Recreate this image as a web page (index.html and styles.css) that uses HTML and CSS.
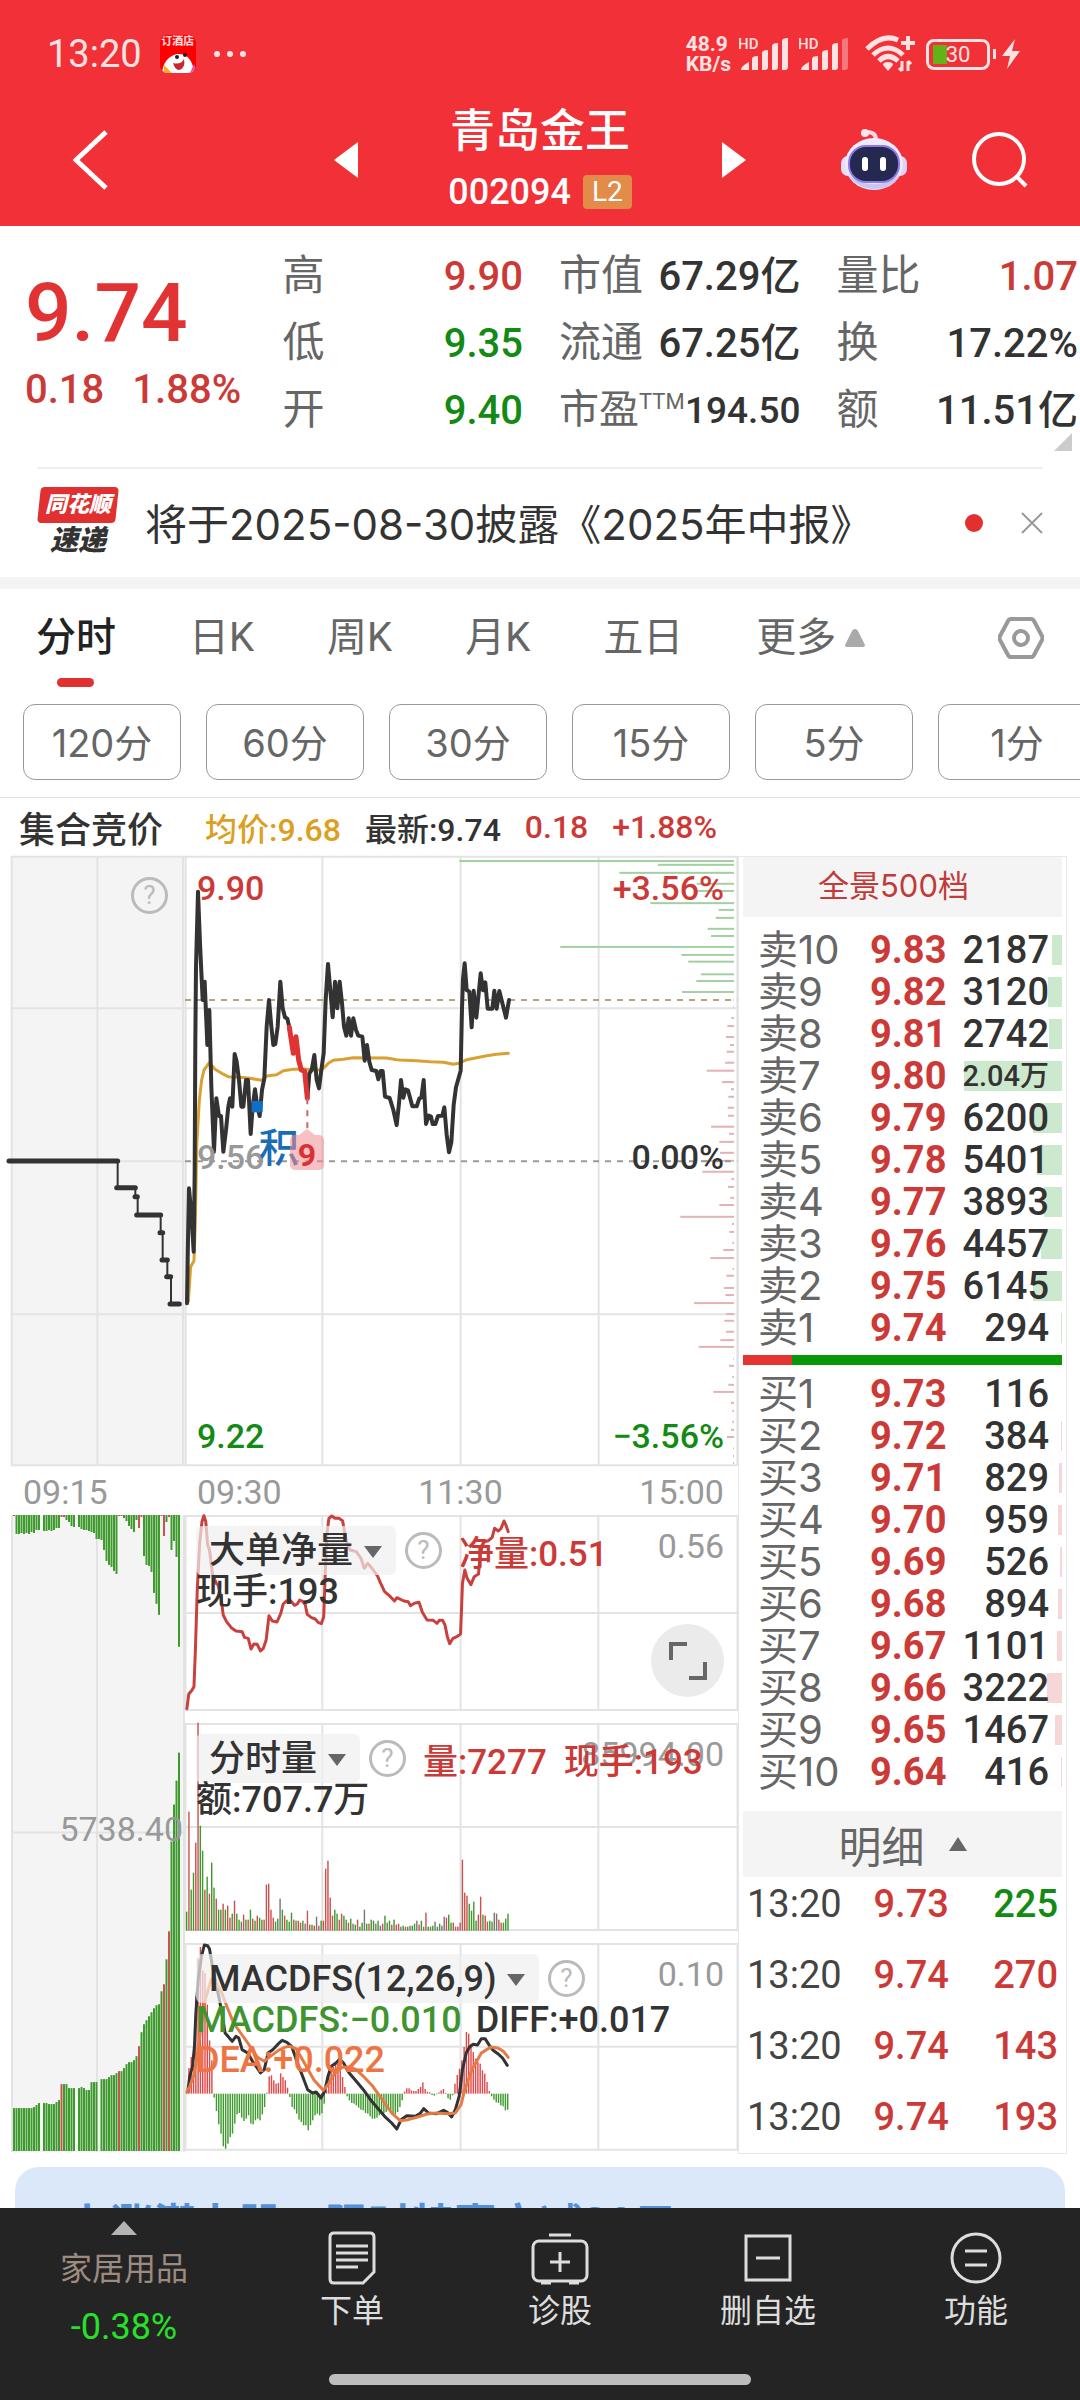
FILE: index.html
```html
<!DOCTYPE html>
<html lang="zh-CN">
<head>
    <meta charset="UTF-8">
    <meta name="viewport" content="width=device-width, initial-scale=1.0">
    <title>青岛金王 002094</title>
    <link rel="stylesheet" href="styles.css">
</head>
<body>
    <header class="top">
        <!-- 状态栏 -->
        <div class="status">
            <span class="clock">13:20</span>
            <span class="app-icon"><b>订酒店</b>
                <svg width="38" height="24" viewBox="0 0 38 24"><path d="M2 24c1-10 6-17 15-19 9-1 16 5 17 19z" fill="#fff"/><path d="M4 24v-8l8 8z" fill="#f6b21d"/><path d="M13 14q8 2 11-4 2 9-5 11-4 0-6-7z" fill="#c9272d"/><circle cx="17" cy="8" r="2" fill="#222"/><circle cx="25" cy="6" r="2" fill="#222"/><path d="M30 24l4-9 3 9z" fill="#e354a4"/></svg>
            </span>
            <span class="dots"><i></i><i></i><i></i></span>
            <span class="speed">48.9<br>KB/s</span>
            <svg class="signal" width="50" height="36" viewBox="0 0 50 36" fill="#ffe3e3"><text x="-1" y="13" font-size="15">HD</text><path d="M2 34q0-4 8-8v8zM13 34V23q0-3 6-3v14zM23 34V17q0-3 6-3v17q0 3-3 3zM33 34V10q0-3 6-3v24q0 3-3 3zM43 34V5q0-3 6-3v29q0 3-3 3z"/></svg>
            <svg class="signal" width="50" height="36" viewBox="0 0 50 36" fill="#ffe3e3"><text x="-1" y="13" font-size="15">HD</text><path d="M2 34q0-4 8-8v8zM13 34V23q0-3 6-3v14zM23 34V17q0-3 6-3v17q0 3-3 3zM33 34V10q0-3 6-3v24q0 3-3 3z"/><path d="M43 34V5q0-3 6-3v29q0 3-3 3z" opacity=".4"/></svg>
            <svg class="wifi" width="50" height="38" viewBox="0 0 50 38" fill="none" stroke="#ffe3e3" stroke-width="5"><path d="M2 14Q18-2 33 5M8 20Q23 6 38 20M14 26Q23 17 33 26"/><path d="M23 27q-5 0-5 3l5 6 5-6q0-3-5-3z" fill="#ffe3e3" stroke="none"/><path d="M43 1v14M36 8h14" stroke-width="4"/><path d="M37 26v10M43 26v10M34 33l3 3M46 29l-3-3" stroke-width="3"/></svg>
            <span class="battery"><b>30</b></span>
            <svg class="bolt" width="18" height="30" viewBox="0 0 18 30" fill="#ffe3e3"><path d="M13 0L0 17h8L5 30 18 12h-8z"/></svg>
        </div>
        <!-- 标题栏 -->
        <div class="title-bar">
            <div class="title-side">
                <button class="icon-btn" aria-label="返回"><svg width="36" height="60" viewBox="0 0 36 60" fill="none" stroke="#fff" stroke-width="5"><path d="M33 2L3 30l30 28"/></svg></button>
                <button class="icon-btn" aria-label="上一只"><svg width="24" height="36" viewBox="0 0 24 36" fill="#fff"><path d="M24 0v36L0 18z"/></svg></button>
            </div>
            <div class="stock-name">
                <h1>青岛金王</h1>
                <p>002094 <span class="l2">L2</span></p>
            </div>
            <div class="title-side">
                <button class="icon-btn next" aria-label="下一只"><svg width="24" height="36" viewBox="0 0 24 36" fill="#fff"><path d="M0 0l24 18L0 36z"/></svg></button>
                <button class="icon-btn" aria-label="智能助手">
                    <svg width="68" height="64" viewBox="0 0 68 64">
                        <path d="M36 12q0-8-9-8" fill="none" stroke="#f6d9e6" stroke-width="4"/><circle cx="25" cy="5" r="4" fill="#fbe6ee"/>
                        <rect x="1" y="28" width="14" height="20" rx="7" fill="#e6defc"/><rect x="53" y="28" width="14" height="20" rx="7" fill="#dcd3fa"/>
                        <ellipse cx="34" cy="36" rx="29" ry="26" fill="#eceafc"/><path d="M8 46q8 14 26 15 19 0 26-15-10 10-26 10T8 46z" fill="#c9c6f4"/>
                        <rect x="9" y="18" width="50" height="36" rx="17" fill="#26294f" stroke="#8d79e8" stroke-width="2"/>
                        <rect x="22" y="29" width="6" height="14" rx="3" fill="#fff"/><rect x="40" y="29" width="6" height="14" rx="3" fill="#fff"/>
                    </svg>
                </button>
                <button class="icon-btn search" aria-label="搜索"><svg width="56" height="56" viewBox="0 0 56 56" fill="none" stroke="#fff" stroke-width="4"><circle cx="27" cy="27" r="25"/><path d="M44 44l10 10"/></svg></button>
            </div>
        </div>
    </header>

    <!-- 报价 -->
    <section class="quote">
        <div class="price">
            <strong>9.74</strong>
            <p><span>0.18</span><span>1.88%</span></p>
        </div>
        <dl>
            <div><dt>高</dt><dd class="red">9.90</dd></div>
            <div><dt>低</dt><dd class="green">9.35</dd></div>
            <div><dt>开</dt><dd class="green">9.40</dd></div>
        </dl>
        <dl>
            <div><dt>市值</dt><dd>67.29亿</dd></div>
            <div><dt>流通</dt><dd>67.25亿</dd></div>
            <div class="small"><dt>市盈<sup>TTM</sup></dt><dd>194.50</dd></div>
        </dl>
        <dl>
            <div><dt>量比</dt><dd class="red">1.07</dd></div>
            <div><dt>换</dt><dd>17.22%</dd></div>
            <div><dt>额</dt><dd>11.51亿</dd></div>
        </dl>
        <svg class="corner" width="18" height="18" viewBox="0 0 18 18" fill="#ccc"><path d="M18 0v18H0z"/></svg>
    </section>

    <!-- 快讯 -->
    <section class="news">
        <span class="news-logo"><b>同花顺</b><i>速递</i></span>
        <a href="#">将于2025-08-30披露《2025年中报》</a>
        <span class="dot"></span>
        <button class="icon-btn" aria-label="关闭"><svg width="22" height="22" viewBox="0 0 22 22" stroke="#999" stroke-width="2"><path d="M1 1l20 20M21 1L1 21"/></svg></button>
    </section>

    <nav class="tabs">
        <a href="#" class="active">分时</a>
        <a href="#">日K</a>
        <a href="#">周K</a>
        <a href="#">月K</a>
        <a href="#">五日</a>
        <a href="#">更多<svg width="20" height="18" viewBox="0 0 20 18" fill="#aaa"><path d="M10 0q2 0 3 2l7 14q0 2-2 2H2q-2 0-2-2L7 2q1-2 3-2z"/></svg></a>
        <button class="icon-btn setting" aria-label="设置"><svg width="46" height="44" viewBox="0 0 46 44" fill="none" stroke="#999" stroke-width="4"><path d="M13 3h20q2 0 3 2l8 15q1 2 0 4l-8 15q-1 2-3 2H13q-2 0-3-2L2 24q-1-2 0-4L10 5q1-2 3-2z"/><circle cx="23" cy="22" r="7"/></svg></button>
    </nav>
    <div class="periods">
        <button>120分</button>
        <button>60分</button>
        <button>30分</button>
        <button>15分</button>
        <button>5分</button>
        <button>1分</button>
    </div>

    <div class="summary">
        <span>集合竞价</span>
        <span class="avg">均价:9.68</span>
        <span>最新:9.74</span>
        <span class="red">0.18</span>
        <span class="red">+1.88%</span>
    </div>

    <main class="market">
        <div class="charts">
            <!-- 集合竞价 -->
            <div class="auction">
                <div class="auction-price">
                    <svg viewBox="33 48 522 1830" preserveAspectRatio="none">
                        <path class="grid" d="M33 50H555M33 505H555M33 964H555M33 1423H555M33 1876H555M35 48V1878M292 48V1878M549 48V1878"/>
                        <path class="line" d="M353 963V1043M406 1043V1070M413 1070V1125M482 1125V1178M488 1178V1260M502 1260V1310M513 1310V1392" stroke-width="2"/>
                        <path class="line" d="M27 963H353M350 1043H406M405 1070H412M410 1125H482M480 1178H488M486 1260H502M500 1310H512M510 1392H538" stroke-width="5"/>
                    </svg>
                    <button class="help" aria-label="集合竞价说明">?</button>
                </div>
                <div class="times"><span>09:15</span></div>
                <div class="auction-volume">
                    <svg viewBox="11 1515 174 638" preserveAspectRatio="none">
                        <path class="grid" d="M12 1515V2153M97 1515V2153M184 1515V2153M11 1833H185"/>
                        <g id="auctionBars"></g>
                    </svg>
                    <span class="scale">5738.40</span>
                </div>
            </div>

            <!-- 分时走势 -->
            <div class="session">
                <div class="price-chart">
                    <svg viewBox="555 48 1659 1830" preserveAspectRatio="none">
                        <path class="grid" d="M555 50H2214M555 505H2214M555 1423H2214M555 1876H2214M557 48V1878M967 48V1878M1382 48V1878M1796 48V1878M2212 48V1878"/>
                        <g id="depthBars"></g>
                        <path class="dash" d="M555 480H2212" stroke="#b5a47c"/>
                        <path class="dash" d="M555 964H2212" stroke="#999"/>
                        <polyline class="line avg-line" points="565,1385 572,1280 582,1262 586,1150 590,920 598,780 605,720 612,690 628,668 645,688 665,700 685,710 720,712 750,715 785,721 800,708 830,704 850,692 880,688 910,687 940,689 965,690 985,670 1000,661 1030,658 1060,653 1160,654 1190,659 1200,660 1250,662 1290,665 1330,667 1360,673 1380,669 1400,659 1430,653 1460,647 1490,643 1525,640"/>
                        <polyline class="line" stroke-width="4" points="561,1390 564,1200 567,1045 574,1120 581,1235 584,1000 586,600 588,380 594,155 600,310 608,480 614,425 622,615 628,510 634,740 642,935 649,775 657,828 663,828 670,935 678,870 685,800 690,775 697,800 704,642 710,665 717,720 724,800 730,800 738,720 744,720 752,882 758,800 765,748 772,800 779,828 786,750 793,715 800,560 807,480 814,560 820,615 826,612 833,560 841,425 848,505 855,532 862,536 868,562"/>
                        <polyline class="line" stroke-width="4" points="922,775 928,700 935,690 943,645 950,720 957,745 964,690 971,640 977,480 984,372 990,440 998,532 1005,425 1012,505 1019,425 1026,490 1032,560 1039,587 1046,535 1053,587 1060,535 1068,570 1075,587 1087,590 1094,662 1101,615 1108,665 1115,690 1129,693 1135,718 1142,693 1148,693 1155,770 1169,774 1180,810 1190,855 1197,790 1203,720 1210,773 1216,748 1224,751 1237,799 1250,799 1258,775 1264,773 1271,720 1278,852 1286,827 1293,830 1298,852 1306,852 1314,828 1327,827 1333,802 1340,884 1347,937 1354,907 1361,795 1368,742 1382,692 1386,505 1389,417 1394,370 1400,450 1408,455 1415,562 1421,452 1429,533 1442,400 1449,451 1456,427 1463,506 1477,506 1483,452 1490,506 1498,453 1518,533 1527,480"/>
                        <polyline class="line nine-line" points="868,562 880,640 888,590 896,660 904,690 914,694 922,775"/>
                        <path d="M922 775V870" class="dash" stroke="#c66"/>
                        <rect x="755" y="783" width="33" height="34" fill="#0f6fc6"/>
                    </svg>
                    <span class="mark left high red">9.90</span>
                    <span class="mark right high red">+3.56%</span>
                    <span class="mark left mid gray">9.56</span>
                    <span class="mark right mid">0.00%</span>
                    <span class="mark left low green">9.22</span>
                    <span class="mark right low green">−3.56%</span>
                    <span class="tag-ji">积</span>
                    <span class="tag-nine">9</span>
                </div>
                <div class="times"><span>09:30</span><span>11:30</span><span>15:00</span></div>

                <div class="indicator net">
                    <svg viewBox="392 195 1172 588" preserveAspectRatio="none">
                        <path class="grid" d="M392 198H1564M392 489H1564M392 780H1564M393 195V783M683 195V783M976 195V783M1268 195V783M1563 195V783"/>
                        <polyline class="line net-line" points="396,776 400,732 406,722 411,710 414,600 418,420 423,280 428,215 432,197 436,215 440,285 444,300 450,370 458,400 462,405 468,440 473,495 480,515 490,533 500,543 513,545 518,562 526,565 532,597 538,582 545,583 552,603 558,595 564,570 570,497 577,513 587,516 595,490 600,462 608,452 616,452 624,466 630,462 635,450 642,455 647,465 651,493 660,503 668,507 675,518 681,521 686,500 688,420 690,340 693,250 697,205 703,198 710,205 718,205 726,212 730,245 736,285 742,300 755,305 765,325 772,355 779,340 790,358 800,378 806,398 815,425 825,437 836,453 841,443 856,453 865,455 870,467 878,460 888,457 895,487 905,510 918,511 926,520 931,511 938,511 943,525 948,560 953,581 960,565 968,560 976,552 978,480 980,400 985,360 990,385 998,404 1005,380 1014,372 1018,310 1025,275 1035,272 1043,262 1048,235 1056,243 1062,235 1068,213 1072,225 1077,245"/>
                    </svg>
                    <span class="scale">0.56</span>
                    <div class="legend">
                        <span class="picker"><select aria-label="指标一"><option>大单净量</option></select></span>
                        <button class="help" aria-label="大单净量说明">?</button>
                        <span class="red">净量:0.51</span>
                    </div>
                    <div class="legend-row"><span>现手:193</span></div>
                    <button class="expand" aria-label="全屏"><svg width="38" height="38" viewBox="0 0 38 38" fill="none" stroke="#666" stroke-width="4"><path d="M2 18V2h16M36 20v16H20"/></svg></button>
                </div>
                <div class="indicator">
                    <svg viewBox="392 39 1172 624" preserveAspectRatio="none">
                        <path class="grid" d="M392 42H1564M392 351H1564M392 660H1564M393 39V663M683 39V663M976 39V663M1268 39V663M1563 39V663"/>
                        <g id="volumeBars"></g>
                    </svg>
                    <span class="scale">85994.00</span>
                    <div class="legend">
                        <span class="picker"><select aria-label="指标二"><option>分时量</option></select></span>
                        <button class="help" aria-label="分时量说明">?</button>
                        <span class="red">量:7277</span>
                        <span class="red">现手:193</span>
                    </div>
                    <div class="legend-row"><span>额:707.7万</span></div>
                </div>
                <div class="indicator">
                    <svg viewBox="392 70 1172 624" preserveAspectRatio="none">
                        <path class="grid" d="M392 73H1564M392 381H1564M392 690H1564M393 70V694M683 70V694M976 70V694M1268 70V694M1563 70V694"/>
                        <g id="macdBars"></g>
                        <polyline class="line" stroke-width="3" points="398,515 402,470 408,440 412,380 415,280 420,180 427,110 433,76 440,78 444,88 450,140 458,195 465,240 470,280 477,340 492,365 500,350 506,355 513,390 525,400 535,425 545,445 552,460 560,450 568,400 578,390 590,372 598,362 608,368 618,380 628,420 640,465 652,510 662,520 670,517 680,535 688,515 695,470 702,440 712,430 720,418 728,430 740,460 755,485 770,510 785,540 800,565 815,590 830,610 841,628 850,600 862,588 880,590 890,582 898,567 908,580 925,582 940,572 948,578 957,592 965,570 973,530 980,450 988,400 995,382 1003,374 1012,376 1020,357 1028,357 1036,375 1045,392 1055,402 1065,415 1075,437"/>
                        <polyline class="line dea-line" points="396,517 402,500 410,470 418,410 425,330 435,240 448,178 458,190 470,220 482,265 495,310 510,340 525,370 545,412 560,425 575,408 590,392 605,382 615,380 628,388 645,430 665,480 685,512 695,495 710,460 725,443 740,442 755,450 770,470 790,500 810,540 830,580 848,603 865,600 885,592 905,583 925,580 950,582 965,580 977,555 985,510 1000,450 1020,400 1040,382 1055,385 1067,395 1077,413"/>
                    </svg>
                    <span class="scale">0.10</span>
                    <div class="legend">
                        <span class="picker"><select aria-label="指标三"><option>MACDFS(12,26,9)</option></select></span>
                        <button class="help" aria-label="MACD说明">?</button>
                    </div>
                    <div class="legend-row"><span class="macd">MACDFS:−0.010</span><span>DIFF:+0.017</span></div>
                    <div class="legend-row"><span class="dea">DEA:+0.022</span></div>
                </div>
            </div>
        </div>

        <!-- 盘口 -->
        <aside class="book">
            <a href="#" class="book-head">全景500档</a>
            <table class="orders sell"><tbody id="sellRows"></tbody></table>
            <div class="ratio"><i style="width: 15.5%"></i></div>
            <table class="orders buy"><tbody id="buyRows"></tbody></table>
            <button class="detail-head">明细<svg width="18" height="14" viewBox="0 0 18 14" fill="#666"><path d="M9 0l9 14H0z"/></svg></button>
            <table class="detail">
                <tbody>
                    <tr><td>13:20</td><td class="red">9.73</td><td class="green">225</td></tr>
                    <tr><td>13:20</td><td class="red">9.74</td><td class="red">270</td></tr>
                    <tr><td>13:20</td><td class="red">9.74</td><td class="red">143</td></tr>
                    <tr><td>13:20</td><td class="red">9.74</td><td class="red">193</td></tr>
                </tbody>
            </table>
        </aside>
    </main>

    <div class="promo-wrap"><a href="#" class="promo">上涨潜力股，限时特惠立减30元</a></div>

    <!-- 底部导航 -->
    <footer class="bottom">
        <nav class="actions">
            <a href="#" class="sector">
                <svg width="26" height="14" viewBox="0 0 26 14" fill="#b4b4b4"><path d="M13 0l13 14H0z"/></svg>
                <span>家居用品</span>
                <b>-0.38%</b>
            </a>
            <a href="#"><svg width="50" height="54" viewBox="0 0 50 54" fill="none" stroke="#ddd" stroke-width="3"><path d="M7 2h36q4 0 4 4v35L36 52H7q-4 0-4-4V6q0-4 4-4z"/><path d="M9 15h32M9 22h32M9 29h32M9 36h22"/></svg>下单</a>
            <a href="#"><svg width="58" height="54" viewBox="0 0 58 54" fill="none" stroke="#ddd" stroke-width="3"><rect x="2" y="10" width="54" height="40" rx="6"/><path d="M18 4h22M10 52h10M38 52h10M29 21v20M19 31h20"/></svg>诊股</a>
            <a href="#"><svg width="50" height="54" viewBox="0 0 50 54" fill="none" stroke="#ddd" stroke-width="3"><path d="M3 5h44v44H3zM13 27h24"/></svg>删自选</a>
            <a href="#"><svg width="52" height="54" viewBox="0 0 52 54" fill="none" stroke="#ddd" stroke-width="3"><circle cx="26" cy="27" r="24"/><path d="M15 20h22M15 34h22"/></svg>功能</a>
        </nav>
        <div class="home-bar"></div>
    </footer>

    <script src="script.js"></script>
</body>
</html>
```
FILE: styles.css
```css
* {
    box-sizing: border-box;
}
body {
    margin: 0;
    background: #fff;
    color: #333;
    font-family: Roboto, "Noto Sans CJK SC", sans-serif;
    font-size: 36px;
}
h1, p, dl, dd {
    margin: 0;
}
a {
    color: inherit;
    text-decoration: none;
}
button, select {
    font: inherit;
    color: inherit;
    background: none;
    border: none;
    padding: 0;
    margin: 0;
}
svg {
    display: block;
    flex: none;
}
table {
    width: 100%;
    border-collapse: collapse;
}
.icon-btn {
    display: flex;
    align-items: center;
}
.red {
    color: #cc3a38;
}
.green {
    color: #138a13;
}
.gray {
    color: #999;
}

/* 顶部 */
.top {
    background: #f13037;
    color: #fff;
    height: 226px;
}
.status {
    display: flex;
    align-items: center;
    height: 108px;
    padding: 0 60px 0 47px;
    color: #ffe3e3;
}
.clock {
    font-size: 38px;
}
.app-icon {
    width: 36px;
    height: 38px;
    margin: 0 18px;
    background: #f00;
    border-radius: 8px;
    overflow: hidden;
    text-align: center;
}
.app-icon b {
    display: block;
    font-size: 11px;
    line-height: 14px;
    white-space: nowrap;
}
.dots {
    display: flex;
    gap: 7px;
}
.dots i {
    width: 6px;
    height: 6px;
    border-radius: 50%;
    background: #ffe3e3;
}
.speed {
    margin-left: auto;
    margin-right: 8px;
    font-size: 21px;
    font-weight: 700;
    line-height: 20px;
}
.signal {
    margin-right: 10px;
    font-weight: 500;
}
.wifi {
    margin: 0 11px 0 6px;
}
.battery {
    position: relative;
    width: 64px;
    height: 31px;
    border: 3px solid #ffe3e3;
    border-radius: 8px;
    text-align: center;
    background: linear-gradient(#62b318, #62b318) 4px center / 14px 19px no-repeat;
}
.battery::after {
    content: "";
    position: absolute;
    right: -9px;
    top: 7px;
    width: 3px;
    height: 10px;
    background: #ffe3e3;
}
.battery b {
    display: block;
    font-size: 22px;
    font-weight: 400;
    line-height: 25px;
}
.bolt {
    margin-left: 12px;
}
.title-bar {
    display: grid;
    grid-template-columns: 1fr auto 1fr;
    align-items: start;
    column-gap: 90px;
    padding: 0 52px;
}
.title-side {
    display: flex;
    align-items: center;
    justify-content: space-between;
    height: 104px;
}
.title-side:first-child {
    padding-left: 21px;
}
.next {
    margin-right: auto;
}
.search {
    margin-left: 64px;
}
.stock-name {
    text-align: center;
}
.stock-name h1 {
    font-size: 45px;
    font-weight: 500;
    line-height: 48px;
}
.stock-name p {
    display: flex;
    align-items: center;
    gap: 12px;
    margin-top: 6px;
    font-size: 36px;
    font-weight: 500;
    line-height: 60px;
}
.l2 {
    padding: 0 9px;
    font-size: 28px;
    font-weight: 400;
    line-height: 34px;
    background: #e38b48;
    border-radius: 4px;
}

/* 报价 */
.quote {
    position: relative;
    display: grid;
    grid-template-columns: 258fr 277fr 278fr 242fr;
    padding: 17px 2px 23px 25px;
}
.price {
    color: #e23334;
    padding-top: 17px;
}
.price strong {
    display: block;
    font-size: 82px;
    font-weight: 500;
    line-height: 106px;
}
.price p {
    display: flex;
    gap: 28px;
    font-size: 40px;
    font-weight: 500;
    line-height: 48px;
    color: #cc3a38;
}
.quote dl {
    padding-right: 36px;
}
.quote dl:last-of-type {
    padding-right: 0;
}
.quote dl div {
    display: flex;
    justify-content: space-between;
    align-items: center;
    height: 67px;
    white-space: nowrap;
    font-size: 40px;
}
.quote dl .small {
    font-size: 37px;
}
.quote dt {
    color: #666;
    font-size: 42px;
    line-height: 54px;
    padding-bottom: 2px;
}
.quote .small dt {
    font-size: 40px;
}
.quote sup {
    font-size: 22px;
    line-height: 22px;
}
.quote dd {
    font-weight: 500;
    line-height: 48px;
}
.corner {
    position: absolute;
    right: 8px;
    bottom: 16px;
}

/* 快讯 */
.news {
    display: flex;
    align-items: center;
    height: 110px;
    margin: 0 37px;
    border-top: 2px solid #eee;
}
.news-logo {
    position: relative;
    width: 82px;
    text-align: center;
    font-style: italic;
    font-weight: 900;
}
.news-logo::before {
    content: "";
    position: absolute;
    inset: 0 2px auto;
    height: 36px;
    background: #e0302f;
    border-radius: 4px;
    transform: skewX(-6deg);
}
.news-logo b, .news-logo i {
    display: block;
    position: relative;
    line-height: 36px;
}
.news-logo b {
    font-size: 22px;
    color: #fff;
}
.news-logo i {
    font-size: 28px;
}
.news a {
    flex: 1;
    margin-left: 26px;
    padding-bottom: 4px;
    font-family: Inter, "Noto Sans CJK SC", sans-serif;
    font-size: 42px;
    white-space: nowrap;
}
.dot {
    width: 18px;
    height: 18px;
    margin-right: 38px;
    border-radius: 50%;
    background: #e23030;
}

/* 周期切换 */
.tabs {
    display: flex;
    align-items: flex-start;
    gap: 73px;
    height: 127px;
    padding: 18px 36px 0;
    border-top: 12px solid #f4f4f4;
    font-size: 40px;
    color: #666;
}
.tabs a {
    display: flex;
    align-items: center;
    gap: 9px;
    line-height: 62px;
    white-space: nowrap;
}
.tabs .active {
    position: relative;
    color: #222;
    font-weight: 500;
}
.active::after {
    content: "";
    position: absolute;
    left: 21px;
    bottom: -18px;
    width: 37px;
    height: 9px;
    border-radius: 5px;
    background: #e03030;
}
.setting {
    margin-left: auto;
    height: 62px;
}
.periods {
    display: flex;
    gap: 25px;
    padding: 0 0 17px 23px;
    border-bottom: 1px solid #e2e2e2;
    overflow: hidden;
}
.periods button {
    flex: none;
    width: 158px;
    height: 76px;
    padding-bottom: 4px;
    border: 1px solid #999;
    border-radius: 12px;
    font-family: Inter, "Noto Sans CJK SC", sans-serif;
    font-size: 38px;
    color: #666;
}
.summary {
    display: flex;
    align-items: center;
    gap: 24px;
    height: 58px;
    padding: 0 19px;
    font-size: 32px;
    font-weight: 500;
    white-space: nowrap;
}
.summary span:first-child {
    margin-right: 18px;
    font-size: 36px;
}
.avg {
    color: #dba021;
}

/* 图表 */
.market {
    display: grid;
    grid-template-columns: 727fr 329fr;
    padding: 0 13px 0 11px;
}
.charts {
    display: grid;
    grid-template-columns: 174fr 553fr;
    min-width: 0;
}
.auction, .session {
    min-width: 0;
}
.charts svg {
    overflow: visible;
}
.auction > div > svg, .session > div > svg {
    width: 100%;
    height: 100%;
}
.auction-price, .price-chart {
    position: relative;
    height: 610px;
}
.auction-price, .auction-volume {
    background: #f4f4f4;
}
.auction-volume {
    position: relative;
    height: 637px;
}
.grid {
    fill: none;
    stroke: #e3e3e3;
    stroke-width: 2;
    vector-effect: non-scaling-stroke;
}
.line {
    fill: none;
    stroke: #333;
    stroke-linejoin: round;
    stroke-linecap: round;
    vector-effect: non-scaling-stroke;
}
.avg-line {
    stroke: #d9a033;
    stroke-width: 3;
}
.nine-line {
    stroke: #e03333;
    stroke-width: 5;
}
.net-line {
    stroke: #c8413e;
    stroke-width: 3;
}
.dea-line {
    stroke: #e67a45;
    stroke-width: 3;
}
.dash {
    fill: none;
    stroke-width: 2;
    stroke-dasharray: 6 6;
    vector-effect: non-scaling-stroke;
}
.help {
    flex: none;
    width: 37px;
    height: 37px;
    border: 3px solid #bbb;
    border-radius: 50%;
    color: #bbb;
    font-size: 26px;
    font-weight: 400;
    line-height: 31px;
}
.auction-price .help {
    position: absolute;
    top: 21px;
    right: 17px;
}
.times {
    display: flex;
    justify-content: space-between;
    height: 49px;
    padding: 0 14px 0 12px;
    font-size: 34px;
    line-height: 52px;
    color: #999;
}
.scale {
    position: absolute;
    top: 11px;
    right: 14px;
    font-size: 34px;
    line-height: 40px;
    color: #999;
}
.auction-volume .scale {
    top: 294px;
    right: 2px;
}
.mark {
    position: absolute;
    font-size: 34px;
    font-weight: 500;
    line-height: 40px;
}
.left {
    left: 12px;
}
.right {
    right: 14px;
}
.high {
    top: 12px;
}
.mid {
    top: 281px;
}
.low {
    bottom: 10px;
}
.tag-ji {
    position: absolute;
    left: 74px;
    top: 265px;
    font-size: 40px;
    font-weight: 500;
    line-height: 56px;
    color: #1b6cb5;
}
.tag-nine {
    position: absolute;
    left: 105px;
    top: 279px;
    width: 34px;
    height: 35px;
    border-radius: 5px;
    background: rgba(240, 140, 145, .55);
    color: #d83236;
    font-size: 32px;
    font-weight: 700;
    line-height: 40px;
    text-align: center;
}
.tag-nine::before {
    content: "";
    position: absolute;
    left: 9px;
    top: -6px;
    border: 8px solid transparent;
    border-top: 0;
    border-bottom: 6px solid rgba(240, 140, 145, .55);
}

/* 副图指标 */
.indicator {
    position: relative;
    height: 208px;
    margin-bottom: 12px;
}
.net {
    height: 196px;
}
.indicator:last-child {
    margin-bottom: 0;
}
.indicator > svg {
    position: absolute;
}
.legend, .legend-row {
    position: relative;
    display: flex;
    align-items: center;
    padding-left: 11px;
    font-weight: 500;
    white-space: nowrap;
}
.legend {
    gap: 17px;
    height: 57px;
    padding-top: 14px;
    font-size: 35px;
}
.legend-row {
    gap: 14px;
    height: 40px;
    font-size: 36px;
    line-height: 40px;
}
.picker {
    position: relative;
    display: flex;
    margin-right: -8px;
    background: rgba(240, 240, 240, .7);
    border-radius: 6px;
}
.picker::after {
    content: "";
    position: absolute;
    right: 14px;
    top: 20px;
    border: 9px solid transparent;
    border-top: 12px solid #666;
    border-bottom: 0;
    pointer-events: none;
}
.picker select {
    appearance: none;
    height: 49px;
    padding: 0 42px 0 13px;
    font-size: 36px;
    font-weight: 500;
}
.macd {
    color: #40942f;
}
.dea {
    color: #ee7543;
}
.expand {
    position: absolute;
    right: 14px;
    top: 109px;
    display: flex;
    align-items: center;
    justify-content: center;
    width: 73px;
    height: 73px;
    border-radius: 50%;
    background: #ebebeb;
}

/* 盘口 */
.book {
    min-width: 0;
    height: 1298px;
    padding: 0 4px;
    border: 1px solid #e8e8e8;
}
.book-head {
    display: block;
    height: 60px;
    margin-bottom: 12px;
    padding-right: 18px;
    background: #f4f4f4;
    color: #c23b39;
    font-family: Inter, "Noto Sans CJK SC", sans-serif;
    font-size: 31px;
    line-height: 58px;
    text-align: center;
}
.orders {
    table-layout: fixed;
}
.orders tr {
    height: 42px;
}
.orders th, .orders td {
    padding: 0;
    font-size: 38px;
    line-height: 40px;
    white-space: nowrap;
}
.orders th {
    width: 127px;
    padding-left: 15px;
    font-family: Inter, "Noto Sans CJK SC", sans-serif;
    font-size: 40px;
    font-weight: 400;
    color: #666;
    text-align: left;
}
.orders .p {
    width: 84px;
    font-weight: 700;
    color: #cc3a38;
}
.orders .q {
    padding-right: 13px;
    font-weight: 500;
    text-align: right;
    background: linear-gradient(#cce9cd, #cce9cd) right center / var(--bar) 30px no-repeat;
}
.buy .q {
    background-image: linear-gradient(#f6d6d6, #f6d6d6);
}
.orders .wan {
    font-size: 29px;
}
.ratio {
    height: 10px;
    margin: 6px 0 8px;
    background: #059905;
}
.ratio i {
    display: block;
    height: 100%;
    background: #e43331;
}
.detail-head {
    display: flex;
    align-items: center;
    justify-content: center;
    gap: 24px;
    width: 100%;
    height: 66px;
    margin-top: 18px;
    background: #f4f4f4;
    color: #666;
    font-size: 43px;
}
.detail td {
    height: 71px;
    padding: 0 4px 18px;
    font-size: 38px;
    line-height: 40px;
    font-weight: 500;
}
.detail td:first-child {
    font-weight: 400;
    color: #444;
}
.detail td:last-child {
    text-align: right;
}

/* 底部 */
.promo-wrap {
    height: 54px;
    padding: 13px 15px 0;
    overflow: hidden;
}
.promo {
    display: block;
    padding: 24px 52px;
    border-radius: 24px;
    background: #dbe8fa;
    color: #5390d9;
    font-family: "Noto Sans CJK SC", sans-serif;
    font-size: 43px;
    font-weight: 700;
    line-height: 60px;
}
.bottom {
    height: 193px;
    background: #242424;
    color: #ddd;
}
.actions {
    display: grid;
    grid-template-columns: 248fr 208fr 208fr 208fr 208fr;
    font-size: 32px;
}
.actions a {
    display: flex;
    flex-direction: column;
    align-items: center;
    gap: 2px;
    height: 166px;
    padding-top: 23px;
    line-height: 48px;
}
.actions .sector {
    gap: 10px;
    padding-top: 13px;
    color: #9c8b80;
}
.sector b {
    color: #28e028;
    font-weight: 400;
    font-size: 36px;
}
.home-bar {
    width: 39%;
    height: 11px;
    margin: 0 auto;
    border-radius: 6px;
    background: #bdbdbd;
}
```
FILE: script.js
```js
const RED = '#c9514e';
const GREEN = '#3f9a2e';
const GRAY = '#777';

function bar(x, y, w, h, color) {
    return `<rect x="${x}" y="${y}" width="${w}" height="${h}" fill="${color}"/>`;
}

// 集合竞价: 上方未匹配量, 下方匹配量
const unmatched = [1,19,19,18,19,18,19,17,18,15,15,0,16,16,15,16,15,13,13,2,2,5,7,11,12,0,12,14,15,15,16,17,18,24,24,25,35,46,50,52,56,59,1,1,3,6,11,14,17,5,13,2,41,50,51,57,78,89,100,1,21,7,2,35,26,42,132];
const unmatchedRed = [0, 19, 20, 42, 43, 50, 51, 59, 60, 62];
const matched = [43,43,43,43,43,43,43,43,44,46,48,0,48,48,47,47,47,49,51,67,67,67,63,63,63,0,63,64,63,61,61,69,69,69,0,72,72,72,74,76,76,78,80,80,83,87,89,89,91,95,105,119,127,131,135,139,143,146,147,160,167,192,220,310,347,371,399];
const matchedRed = [19, 42, 50, 60, 62];

document.getElementById('auctionBars').innerHTML =
    unmatched.map((h, i) => bar(13 + i * 2.5, 1515, 2, h, unmatchedRed.includes(i) ? RED : GREEN)).join('') +
    matched.map((h, i) => bar(13 + i * 2.5, 2152 - h, 2, h, matchedRed.includes(i) ? RED : GREEN)).join('');

// 委托分布 [y, 左端 x]
const asks = [[50,238],[59,834],[78,718],[104,950],[121,950],[150,811],[166,1016],[185,1007],[211,983],[228,993],[254,541],[273,904],[289,925],[319,963],[335,949],[361,906]];
const bids = [[380,1060],[397,1060],[423,1054],[442,1042],[468,1038],[487,1050],[503,1040],[529,1035],[548,980],[575,1026],[592,1053],[610,1045],[636,1043],[655,1044],[681,993],[698,1047],[717,1018],[743,1020],[762,968],[788,967],[805,1054],[824,1044],[850,1051],[867,1018],[895,901],[912,1056],[931,1048],[957,1057],[974,1030],[993,991],[1019,1058],[1035,1039],[1064,1032],[1081,1036],[1100,942],[1126,1039],[1142,1033],[1168,1038],[1188,1021],[1204,956],[1233,1060],[1249,1047],[1275,1057],[1294,1045],[1311,1000],[1337,1053],[1356,1057],[1382,1057],[1401,1053],[1418,1041],[1445,1060],[1463,1059],[1480,1059]];
const depth = (list, color) => list.map(([y, x]) => bar(x + 1140, y * 1.263 - 3, 1062 - x, 6, color)).join('');
document.getElementById('depthBars').innerHTML = depth(asks, '#a3d0a2') + depth(bids, '#e3b3b3');

// 分时量
const volume = [19,119,41,58,88,208,105,80,41,54,37,68,43,32,21,21,27,21,25,13,17,30,17,11,9,16,11,11,21,12,10,15,13,11,11,46,47,21,13,9,12,32,21,15,11,9,18,11,10,10,8,10,7,20,6,6,5,14,5,10,10,62,70,33,15,21,17,11,17,15,11,8,12,7,6,11,4,8,21,7,7,11,10,7,10,5,7,15,8,10,6,11,6,7,4,5,4,4,5,5,7,10,6,10,4,18,4,4,5,9,4,7,5,14,13,16,8,8,4,4,8,71,38,35,27,20,29,10,16,34,16,15,9,10,9,18,17,11,8,8,12,17];
const volumeColor = 'grggrrggrgrggrggrgrrgrggkrgrgrgrggrrrrrggkgrgggrgrrgkrrgrkrgrrrrrggrrggrgkgrggkgrggkgkrgkgrgrrkgrgkggkrgkrgggkkgkkrggrrrrrrrggggrrgrrggkkrrggggr';
document.getElementById('volumeBars').innerHTML = volume.map((h, i) => {
    const c = volumeColor[i];
    return bar(394 + i * 4.83, 662 - h * 3, 3, h * 3, c === 'r' ? RED : c === 'k' ? GRAY : GREEN);
}).join('');

// MACD 柱
const macd = [5,77,110,112,292,405,440,370,362,267,160,100,-12,-52,-92,-120,-158,-165,-150,-130,-120,-90,-62,-58,-72,-82,-75,-65,-90,-92,-80,-75,-80,-62,-40,3,52,55,40,30,32,61,50,40,18,-10,-40,-47,-60,-78,-85,-95,-95,-110,-94,-80,-65,-60,-65,-59,-30,10,62,83,80,90,90,70,50,20,-8,-20,-28,-30,-35,-42,-48,-50,-58,-60,-68,-75,-75,-72,-65,-62,-58,-55,-50,-55,-60,-62,-55,-40,-20,6,16,16,10,8,8,14,20,34,14,6,4,-4,-6,-2,4,10,14,2,-14,-18,-5,30,56,75,100,140,185,180,150,125,105,95,90,70,60,35,8,-8,-18,-26,-28,-35,-38,-50,-48];
document.getElementById('macdBars').innerHTML = macd.map((v, i) =>
    bar(394 + i * 4.86, v > 0 ? 522 - v : 522, 3, Math.abs(v), v > 0 ? '#e0484a' : GREEN)
).join('');

// 十档盘口 [价格, 数量, 量柱宽度]
const sells = [['9.83','2187',10],['9.82','3120',14],['9.81','2742',13],['9.80','2.04万',98],['9.79','6200',29],['9.78','5401',25],['9.77','3893',18],['9.76','4457',21],['9.75','6145',29],['9.74','294',1]];
const buys = [['9.73','116',0],['9.72','384',1],['9.71','829',3],['9.70','959',4],['9.69','526',2],['9.68','894',4],['9.67','1101',5],['9.66','3222',15],['9.65','1467',7],['9.64','416',1]];

function orderRow(label, [price, qty, width]) {
    const wan = qty.endsWith('万') ? ' wan' : '';
    return `<tr><th>${label}</th><td class="p">${price}</td><td class="q${wan}" style="--bar: ${width}px">${qty}</td></tr>`;
}
document.getElementById('sellRows').innerHTML = sells.map((r, i) => orderRow('卖' + (10 - i), r)).join('');
document.getElementById('buyRows').innerHTML = buys.map((r, i) => orderRow('买' + (i + 1), r)).join('');
```
